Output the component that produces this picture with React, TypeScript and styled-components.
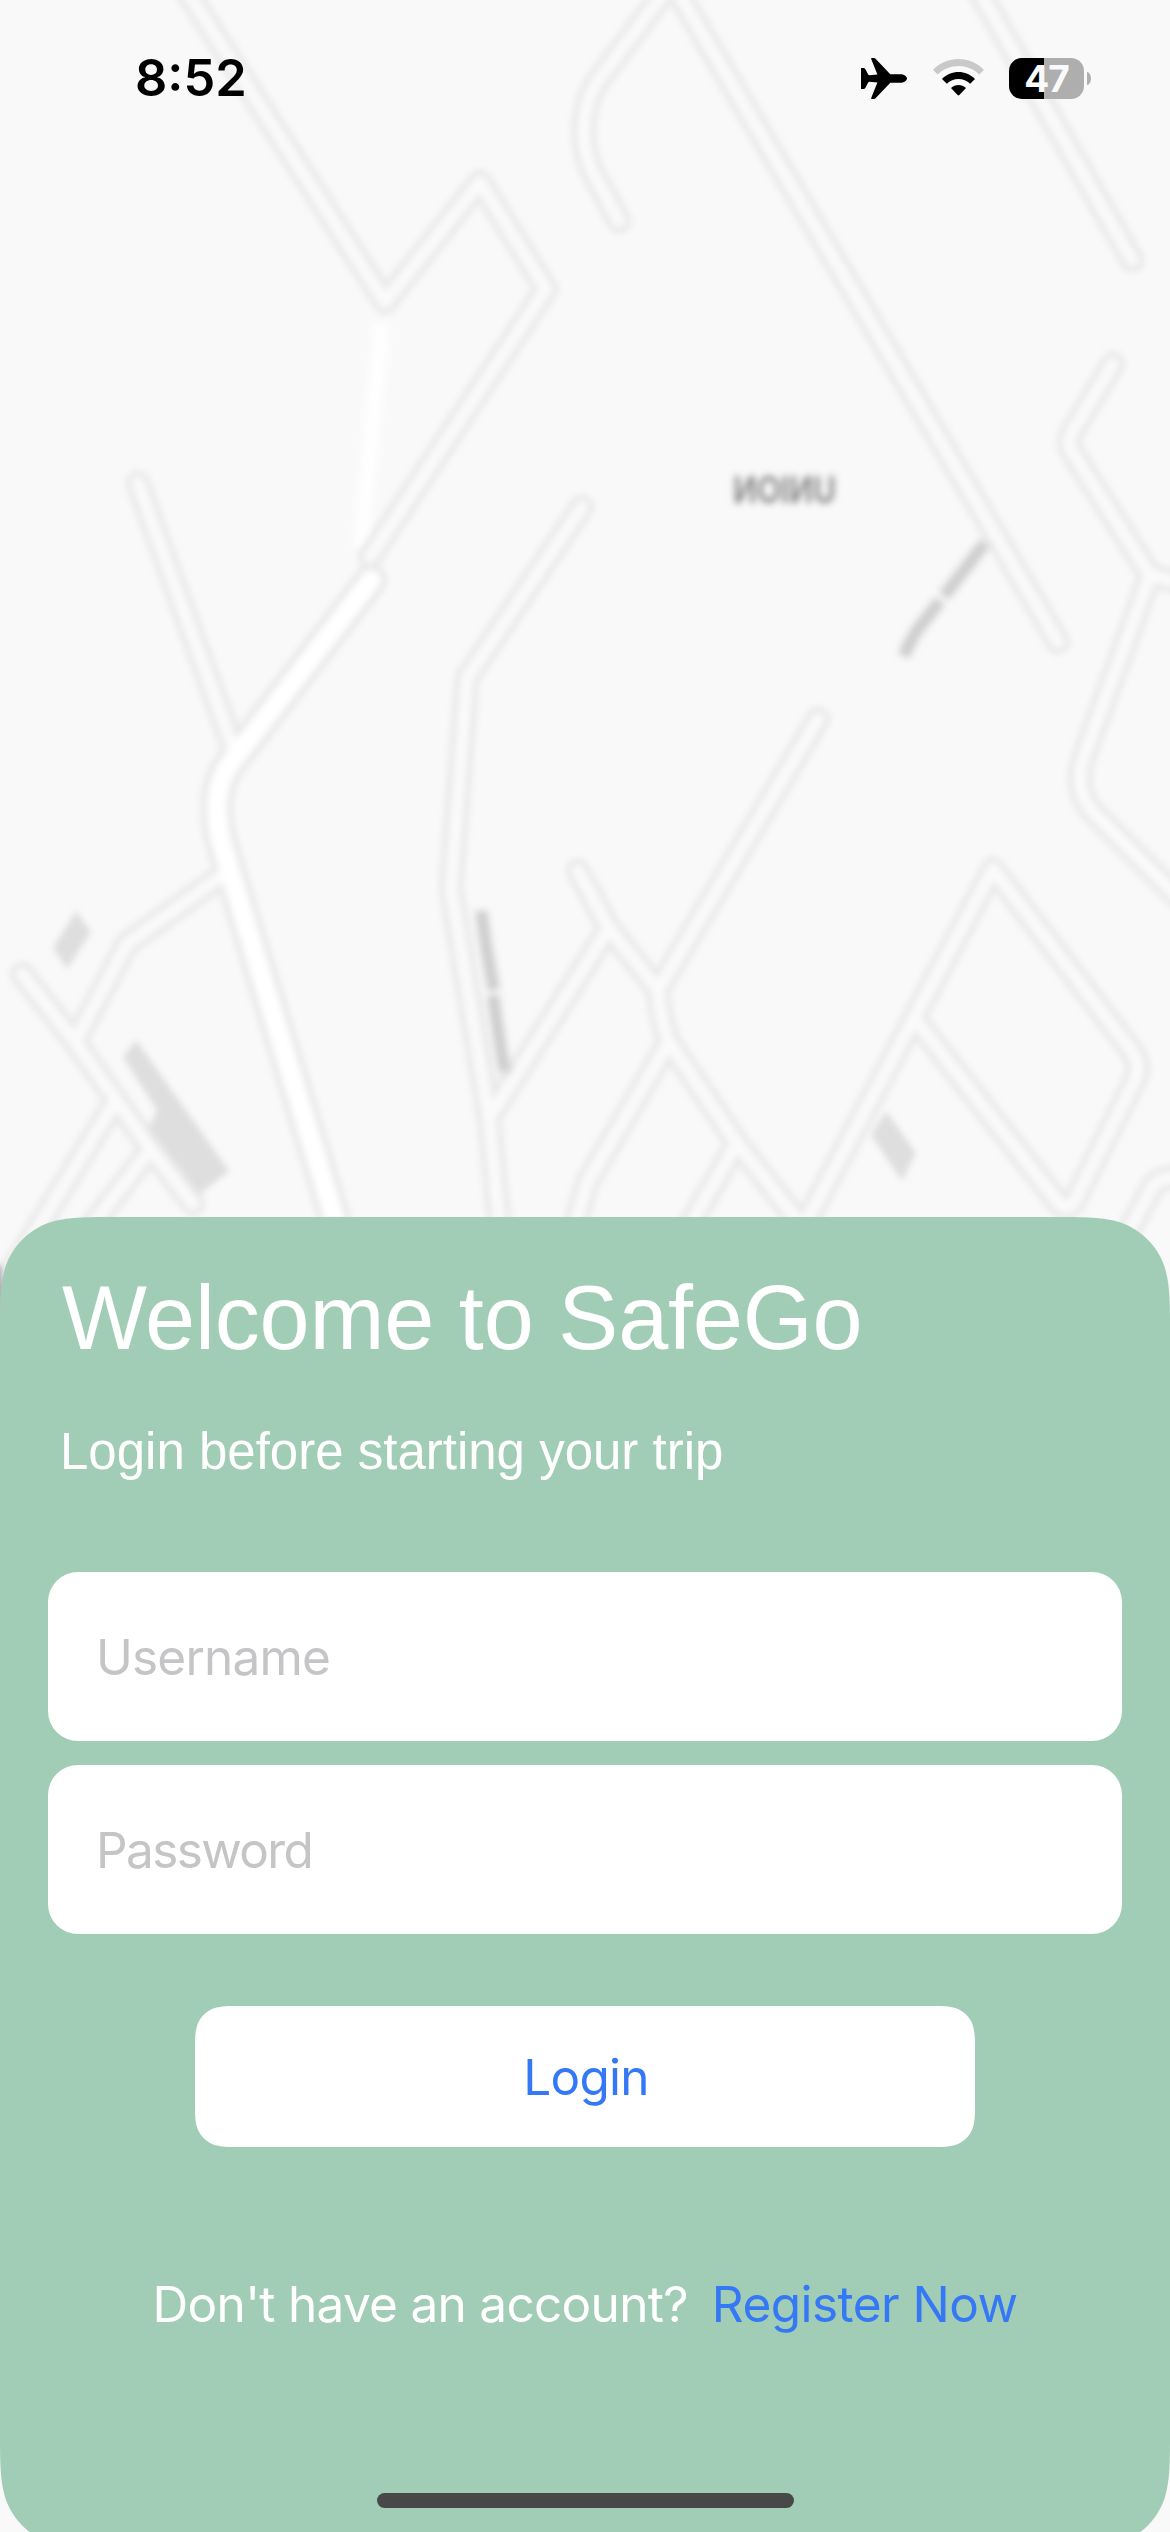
import React from "react";
import styled, { createGlobalStyle } from "styled-components";

/* iOS "continuous" rounded rectangle as a path string */
const smoothRect = (w: number, h: number, r: number): string => {
  const a = 1.528665 * r;
  const b = 1.088493 * r;
  const c = 0.868407 * r;
  const d = 0.631494 * r;
  const e = 0.372824 * r;
  const f = 0.16906 * r;
  const g = 0.074911 * r;
  return [
    `M${a} 0`,
    `L${w - a} 0`,
    `C${w - b} 0 ${w - c} 0 ${w - d} ${g}`,
    `C${w - e} ${f} ${w - f} ${e} ${w - g} ${d}`,
    `C${w} ${c} ${w} ${b} ${w} ${a}`,
    `L${w} ${h - a}`,
    `C${w} ${h - b} ${w} ${h - c} ${w - g} ${h - d}`,
    `C${w - f} ${h - e} ${w - e} ${h - f} ${w - d} ${h - g}`,
    `C${w - c} ${h} ${w - b} ${h} ${w - a} ${h}`,
    `L${a} ${h}`,
    `C${b} ${h} ${c} ${h} ${d} ${h - g}`,
    `C${e} ${h - f} ${f} ${h - e} ${g} ${h - d}`,
    `C0 ${h - c} 0 ${h - b} 0 ${h - a}`,
    `L0 ${a}`,
    `C0 ${b} 0 ${c} ${g} ${d}`,
    `C${f} ${e} ${e} ${f} ${d} ${g}`,
    `C${c} 0 ${b} 0 ${a} 0Z`,
  ].join(" ");
};

const GlobalStyle = createGlobalStyle`
  *, *::before, *::after { box-sizing: border-box; }
  body { margin: 0; background: #f9f9f9; }
`;

const Screen = styled.div`
  position: relative;
  isolation: isolate;
  display: flex;
  flex-direction: column;
  width: 1170px;
  height: 2532px;
  overflow: hidden;
  background: #f9f9f9;
  font-family: Inter, "Liberation Sans", sans-serif;
`;

const MapBackdrop = styled.svg`
  position: absolute;
  inset: 0;
  z-index: -1;
`;

const StatusBar = styled.header`
  display: flex;
  align-items: center;
  flex: none;
  height: 156px;
  padding: 0 79px 0 135px;
`;

const Clock = styled.time`
  margin-right: auto;
  font-size: 50.5px;
  font-weight: 600;
  line-height: 60px;
  letter-spacing: 0;
  color: #000;
`;

const PlaneIcon = styled.svg`
  margin-right: 26px;
`;

const WifiIcon = styled.svg`
  margin-right: 25px;
`;

const Battery = styled.div`
  display: flex;
  align-items: center;
  gap: 3px;
`;

const BatteryBody = styled.div<{ $level: number }>`
  display: grid;
  place-items: center;
  width: 75px;
  height: 41px;
  border-radius: 13px;
  background: linear-gradient(
    to right,
    #000 ${(p) => p.$level}%,
    #aeaeae ${(p) => p.$level}%
  );
  font-size: 37px;
  font-weight: 700;
  line-height: 41px;
  letter-spacing: -1px;
  color: #fafafa;
`;

const BatteryNub = styled.div`
  width: 4px;
  height: 13px;
  border-radius: 0 4px 4px 0 / 0 6.5px 6.5px 0;
  background: #aeaeae;
`;

const Sheet = styled.main`
  display: flex;
  flex-direction: column;
  flex: none;
  height: 1331px;
  margin-top: auto;
  margin-bottom: -16px;
  padding: 49px 48px 0;
  background: #a1cdb6;
  clip-path: path("${smoothRect(1170, 1331, 77)}");
`;

const Title = styled.h1`
  margin: 0 0 52px 14px;
  font: 400 90px/104px "Liberation Sans", Arial, sans-serif;
  letter-spacing: -0.2px;
  color: #fff;
  white-space: nowrap;
`;

const Subtitle = styled.p`
  margin: 0 0 90px 12px;
  font: 400 51px/60px "Liberation Sans", Arial, sans-serif;
  color: #fff;
  white-space: nowrap;
`;

const Form = styled.form`
  display: flex;
  flex-direction: column;
  gap: 24px;
`;

const Field = styled.label`
  display: flex;
  align-items: center;
  height: 169px;
  padding: 1px 48px 0;
  border-radius: 30px;
  background: #fff;
`;

const Placeholder = styled.span<{ $tracking: number }>`
  font-size: 49.5px;
  line-height: 60px;
  letter-spacing: ${(p) => p.$tracking}px;
  color: #c5c5c7;
`;

const LoginButton = styled.button`
  align-self: center;
  width: 780px;
  height: 141px;
  margin-top: 48px;
  padding: 0 0 0 2px;
  border: 0;
  background: #fff;
  clip-path: path("${smoothRect(780, 141, 30)}");
  font: 400 49.5px/60px Inter, sans-serif;
  letter-spacing: -0.8px;
  color: #3478f6;
`;

const RegisterRow = styled.div`
  display: flex;
  justify-content: center;
  gap: 24px;
  margin-top: 127px;
  font-size: 49.5px;
  line-height: 60px;
  white-space: nowrap;
`;

const Prompt = styled.span`
  letter-spacing: -0.7px;
  color: #fff;
`;

const RegisterLink = styled.a`
  letter-spacing: -0.55px;
  color: #3478f6;
`;

const HomeIndicator = styled.div`
  position: absolute;
  left: 377px;
  bottom: 24px;
  width: 417px;
  height: 15px;
  border-radius: 8px;
  background: #484848;
`;

const minorRoads = [
  "M181 -18 L385 302 L480 182 L546 289 L370 557",
  "M138 483 L187 620 L237 758",
  "M619 221 L593 173 Q576 136 590 96 Q593 88 600 78 L672 -18 L1058 642",
  "M974 -18 L1132 260",
  "M1113 364 L1071 434 Q1067 442 1071 450 L1150 575 L1180 583",
  "M1150 575 L1134 620 L1083 759 Q1074 790 1093 812 L1180 899",
  "M818 719 L658 990 Q660 1018 669 1042 L737 1143 L805 1230",
  "M669 1042 L587 1183 L575 1225",
  "M737 1143 L690 1225",
  "M578 871 L609 928 L658 990",
  "M609 928 L489 1118",
  "M582 507 L467 678 L451 889 L489 1118 L500 1230",
  "M800 1234 L914 1018 L993 869 L1131 1050 Q1141 1063 1136 1078 L1074 1202 Q1066 1212 1058 1202 L914 1018",
  "M1180 1177 Q1160 1177 1153 1186 L1112 1262",
  "M22 974 L76 1043 L116 1100 L150 1148 L193 1204",
  "M76 1040 L127 944 L220 877",
  "M116 1100 L0 1290",
  "M150 1150 L90 1228",
];

const mainRoad = "M371 580 L236 756 Q217 778 217 806 Q217 830 224 851 L338 1230";

const MapArt = () => (
  <MapBackdrop width={1170} height={2532} viewBox="0 0 1170 2532" aria-hidden>
    <defs>
      <filter id="soft" filterUnits="userSpaceOnUse" x="-30" y="-30" width="1230" height="1500">
        <feGaussianBlur stdDeviation="3.3" />
      </filter>
      <filter id="softer" filterUnits="userSpaceOnUse" x="-30" y="-30" width="1230" height="1500">
        <feGaussianBlur stdDeviation="3.8" />
      </filter>
    </defs>
    <g filter="url(#soft)" fill="none" strokeLinecap="round" strokeLinejoin="round">
      <path d="M382 324 L361 548" stroke="#fefefe" strokeWidth={16} strokeLinecap="butt" />
      <g stroke="#eae9e9" strokeWidth={25}>
        {minorRoads.map((d) => (
          <path key={d} d={d} />
        ))}
        <path d={mainRoad} strokeWidth={33} />
      </g>
      <g stroke="#fafafa" strokeWidth={12.5}>
        {minorRoads.map((d) => (
          <path key={d} d={d} />
        ))}
      </g>
      <path d={mainRoad} stroke="#ffffff" strokeWidth={20} />
      <g fill="#dfdedf">
        <path d="M76 911 L91 932 L67 969 L53 948Z" />
        <path d="M136 1040 L229 1171 L200 1194 L149 1128 L157 1110 L123 1057Z" />
        <path d="M886 1111 L916 1153 L902 1181 L871 1135Z" />
        <path d="M-20 1262 L1 1266 L5 1290 L2 1325 L-20 1330Z" fill="#a9a8ab" />
      </g>
    </g>
    <g filter="url(#softer)">
      <g fill="none" stroke="#cdcdcd" strokeWidth={12}>
        <path d="M985 543 L944 596" />
        <path d="M940 601 L921 625 Q911 638 904 656" />
        <path d="M481 911 Q486 950 494 990" />
        <path d="M493 995 Q498 1034 505 1072" />
      </g>
      <text
        transform="translate(836 503) scale(-1 1)"
        fontFamily="Inter, sans-serif"
        fontSize={37}
        fontWeight={600}
        textLength={103}
        lengthAdjust="spacingAndGlyphs"
        fill="#828282"
      >
        UNION
      </text>
    </g>
  </MapBackdrop>
);

const fields = [
  { name: "Username", tracking: -0.8 },
  { name: "Password", tracking: -1.6 },
];

export default function App() {
  return (
    <>
      <GlobalStyle />
      <Screen>
        <MapArt />
        <StatusBar>
          <Clock>8:52</Clock>
          <PlaneIcon width={46} height={41} viewBox="0 0 46 41">
            <path
              d="M0 10 H2.6 Q3.6 10 4.3 11 L7.2 16.6 Q7.6 17.2 8.4 17.2 L16.4 16.5 L10.2 1 Q9.8 0 10.8 0 H13 Q14 0 14.8 .9 L29.3 16.2 H39 C43 16.2 46 18.3 46 20.5 C46 22.7 43 24.8 39 24.8 H29.3 L14.8 40.1 Q14 41 13 41 H10.8 Q9.8 41 10.2 40 L16.4 24.5 L8.4 23.8 Q7.6 23.8 7.2 24.4 L4.3 30 Q3.6 31 2.6 31 H0Z"
              fill="#000"
            />
          </PlaneIcon>
          <WifiIcon width={51} height={38} viewBox="0 0 51 38">
            <path d="M0 10.9 C14 -3.6 37 -3.6 51 10.9 L46.2 15.6 C35 4.2 16 4.2 4.8 15.6Z" fill="#c9c9c9" />
            <path d="M9 20 C18 10.7 33 10.7 42 20 L37.2 24.7 C31 18.3 20 18.3 13.8 24.7Z" fill="#000" />
            <path d="M18 29 C22 24.9 29 24.9 33 29 L26.4 36.1 Q25.5 37 24.6 36.1Z" fill="#000" />
          </WifiIcon>
          <Battery>
            <BatteryBody $level={47}>47</BatteryBody>
            <BatteryNub />
          </Battery>
        </StatusBar>
        <Sheet>
          <Title>Welcome to SafeGo</Title>
          <Subtitle>Login before starting your trip</Subtitle>
          <Form>
            {fields.map(({ name, tracking }) => (
              <Field key={name}>
                <Placeholder $tracking={tracking}>{name}</Placeholder>
              </Field>
            ))}
            <LoginButton type="button">Login</LoginButton>
          </Form>
          <RegisterRow>
            <Prompt>Don't have an account?</Prompt>
            <RegisterLink>Register Now</RegisterLink>
          </RegisterRow>
        </Sheet>
        <HomeIndicator />
      </Screen>
    </>
  );
}
